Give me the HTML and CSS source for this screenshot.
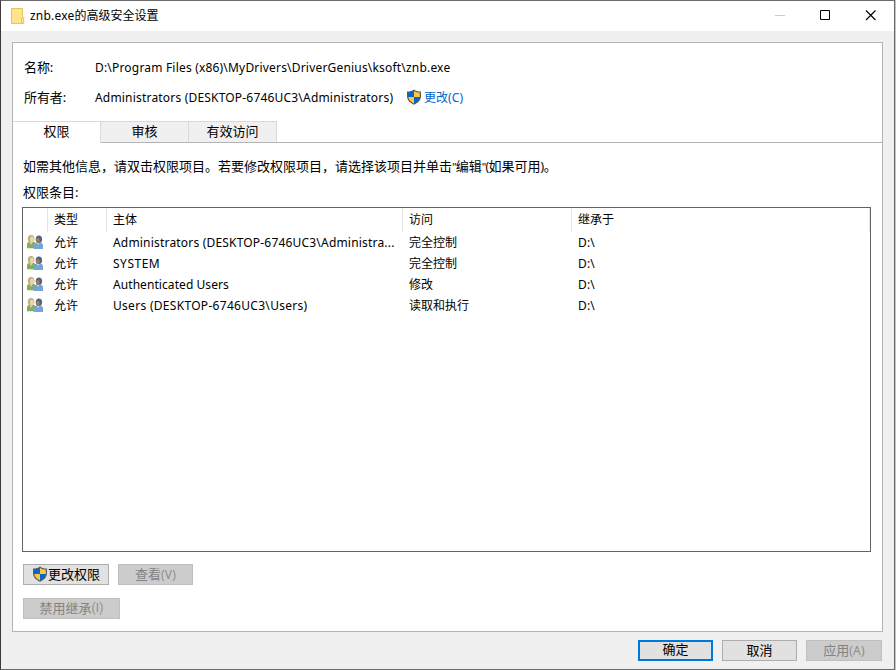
FILE: index.html
```html
<!DOCTYPE html>
<html lang="zh-CN">
<head>
<meta charset="utf-8">
<title>znb.exe的高级安全设置</title>
<link rel="stylesheet" href="styles.css">
</head>
<body>
<svg width="0" height="0" class="defs">
  <symbol id="shield" viewBox="0 0 16 16">
    <path d="M8 .4C6 2 3.700 2.600 1 2.500V7c0 4 2.800 6.800 7 8.700C12.200 13.800 15 11 15 7V2.500C12.300 2.600 10 2 8 .4Z" fill="#555a60"/>
    <path d="M8 2C6 3.100 4.300 3.600 2.200 3.600v4.400H8Z" fill="#0868ca"/>
    <path d="M8 2c2 1.100 3.700 1.600 5.800 1.600v4.400H8Z" fill="#ffc642"/>
    <path d="M2.300 8H8v6.400C4.700 12.900 2.700 11 2.300 8Z" fill="#ffc642"/>
    <path d="M13.700 8H8v6.400c3.300-1.500 5.300-3.400 5.700-6.400Z" fill="#0868ca"/>
  </symbol>
  <symbol id="users" viewBox="0 0 16 14">
    <path d="M0 13.300V9.500C.2 7.700 1.300 6.900 3 6.600h3.100c1.800.4 2.400 1.400 2.400 3v3.700Z" fill="#83ad57"/>
    <path d="M1.800 6 4 10 6 6.500Z" fill="#e4cfa8"/>
    <ellipse cx="4.100" cy="3.800" rx="3.300" ry="3.800" fill="#bfae78"/>
    <ellipse cx="4.900" cy="4.400" rx="1.900" ry="3" fill="#ead7b2"/>
    <path d="M6.600 14v-3.500C6.700 8.600 8 7.800 9.600 7.400h3.500C15 7.800 16 8.600 16 10.500V14Z" fill="#75a5d8"/>
    <path d="m9.500 7 1.500 2.800 2.300-2.800Z" fill="#d7e3ec"/>
    <ellipse cx="11.900" cy="4.200" rx="3.200" ry="3.800" fill="#51647c"/>
    <ellipse cx="10.900" cy="5.400" rx="1.900" ry="2.600" fill="#a27a5c"/>
  </symbol>
</svg>
<div class="window">
  <header class="titlebar">
    <svg class="folder" width="14" height="16" viewBox="0 0 14 16"><path d="M.5.500h11v9h1.200v6H.5Z" fill="#ffe48f" stroke="#e9c557"/><path d="M10.500 15V10.500h1" fill="none" stroke="#e9c557"/></svg>
    <h1><span class="lat">znb.exe</span>的高级安全设置</h1>
    <svg class="controls" width="110" height="30" viewBox="0 0 110 30" fill="none"><path d="M0 14.500h10" stroke="#ccc"/><path d="M45.500 9.500h9v9h-9z" stroke="#000"/><path d="m91 9.500 9.500 9.500m0-9.500L91 19" stroke="#000" stroke-width="1.150"/></svg>
  </header>
  <main class="panel">
    <dl class="info">
      <div><dt>名称:</dt><dd class="lat">D:\Program Files (x86)\MyDrivers\DriverGenius\ksoft\znb.exe</dd></div>
      <div><dt>所有者:</dt><dd class="lat owner">Administrators (DESKTOP-6746UC3\Administrators)</dd><a class="change"><svg width="16" height="16"><use href="#shield"/></svg>更改<span class="key">(C)</span></a></div>
    </dl>
    <nav class="tabs"><span class="tab active">权限</span><span class="tab">审核</span><span class="tab last">有效访问</span></nav>
    <p class="hint">如需其他信息，请双击权限项目。若要修改权限项目，请选择该项目并单击<span class="q">"</span>编辑<span class="q">"</span><span class="paren">(</span>如果可用<span class="paren">)</span>。</p>
    <p class="label">权限条目:</p>
    <section class="list">
      <div class="row head"><span></span><span>类型</span><span>主体</span><span>访问</span><span>继承于</span></div>
      <div class="row"><span><svg width="16" height="14"><use href="#users"/></svg></span><span>允许</span><span class="lat">Administrators (DESKTOP-6746UC3\Administra...</span><span>完全控制</span><span class="lat">D:\</span></div>
      <div class="row"><span><svg width="16" height="14"><use href="#users"/></svg></span><span>允许</span><span class="lat sys">SYSTEM</span><span>完全控制</span><span class="lat">D:\</span></div>
      <div class="row"><span><svg width="16" height="14"><use href="#users"/></svg></span><span>允许</span><span class="lat auth">Authenticated Users</span><span>修改</span><span class="lat">D:\</span></div>
      <div class="row"><span><svg width="16" height="14"><use href="#users"/></svg></span><span>允许</span><span class="lat users">Users (DESKTOP-6746UC3\Users)</span><span>读取和执行</span><span class="lat">D:\</span></div>
    </section>
    <div class="actions">
      <button class="btn perm"><svg width="16" height="16"><use href="#shield"/></svg>更改权限</button>
      <button class="btn view" disabled>查看<span class="key">(V)</span></button>
    </div>
    <div class="actions second"><button class="btn inherit" disabled>禁用继承<span class="key narrow">(I)</span></button></div>
  </main>
  <footer class="footer">
    <button class="btn ok">确定</button>
    <button class="btn">取消</button>
    <button class="btn apply" disabled>应用<span class="key">(A)</span></button>
  </footer>
</div>
</body>
</html>
```
FILE: styles.css
```css
* { box-sizing: border-box; margin: 0; padding: 0; }
body { width: 896px; height: 670px; overflow: hidden; background: #c4c4c4; font: 13px/20px "Noto Sans", "Noto Sans CJK SC", sans-serif; color: #000; }
.defs { display: block; position: absolute; }
.window { width: 895px; height: 670px; background: #f0f0f0; border: 1px solid #6b6b6b; border-left-color: #41393a; display: flex; flex-direction: column; }
.titlebar { height: 30px; background: #fff; display: flex; align-items: center; padding-left: 10px; flex: none; }
.titlebar h1 { font-size: 12px; font-weight: 400; line-height: 20px; margin-left: 5px; }
.controls { margin-left: auto; margin-right: 9px; }
.lat { font-size: 12px; white-space: pre; letter-spacing: .19px; }
.panel { margin: 11px 11px 0; width: 871px; height: 590px; border: 1px solid #b4b4b4; background: #fff; flex: none; }
.info { padding: 14px 0 0 11px; height: 78px; }
.info div { display: flex; height: 30px; align-items: flex-start; }
.info dt { width: 71px; flex: none; line-height: 20px; letter-spacing: -.1px; }
.info dd { line-height: 22px; }
.owner { width: 311px; }
.change { display: flex; color: #0066cc; font-size: 12px; line-height: 22px; }
.change svg { margin: 2px 2px 0 0; }
.key { font-size: 12px; letter-spacing: .2px; }
.key.narrow { font-family: Roboto, sans-serif; font-size: 12px; }
.tabs { display: flex; height: 22px; border-bottom: 1px solid #b4b4b4; }
.tab { width: 88px; height: 22px; text-align: center; line-height: 18px; background: #f0f0f0; border: 1px solid #d9d9d9; border-left: 0; border-bottom-color: #b4b4b4; }
.tab.active { background: #fff; border-bottom-color: #fff; }
.hint { margin: 13px 0 0 10px; line-height: 20px; white-space: nowrap; }
.q { font-size: 11px; letter-spacing: -.8px; }
.paren { font-size: 12px; letter-spacing: -.5px; }
.label { margin: 5px 0 0 10px; line-height: 20px; }
.list { margin: 5px 0 0 9px; width: 849px; height: 345px; border: 1px solid #646464; }
.row { display: grid; grid-template-columns: 25px 59px 296px 169px 1fr; height: 21px; font-size: 12px; line-height: 21px; }
.row span { padding-left: 6px; border-right: 1px solid transparent; white-space: nowrap; }
.row span:first-child { padding-left: 4px; }
.row svg { display: block; margin-top: 3px; }
.row .auth { letter-spacing: .07px; }
.row .users { letter-spacing: .3px; }
.row .sys { letter-spacing: .5px; }
.head { height: 24px; line-height: 24px; }
.head span { border-right-color: #e5e5e5; }
.actions { display: flex; gap: 9px; margin: 12px 0 0 10px; }
.actions.second { margin-top: 13px; }
.btn { width: 75px; height: 21px; border: 1px solid #adadad; background: #e1e1e1; font: inherit; line-height: 17px; padding-bottom: 1px; color: #000; display: flex; align-items: center; justify-content: center; white-space: nowrap; }
.btn:disabled { background: #ccc; border-color: #bfbfbf; color: #838383; }
.btn:disabled .key { color: #8e8e8e; }
.perm { width: 86px; }
.inherit { width: 97px; }
.ok { border: 2px solid #0078d7; line-height: 15px; padding-bottom: 2px; }
.apply { width: 76px; }
.footer { display: flex; justify-content: flex-end; gap: 9px; padding: 8px 12px 0 0; }
```
